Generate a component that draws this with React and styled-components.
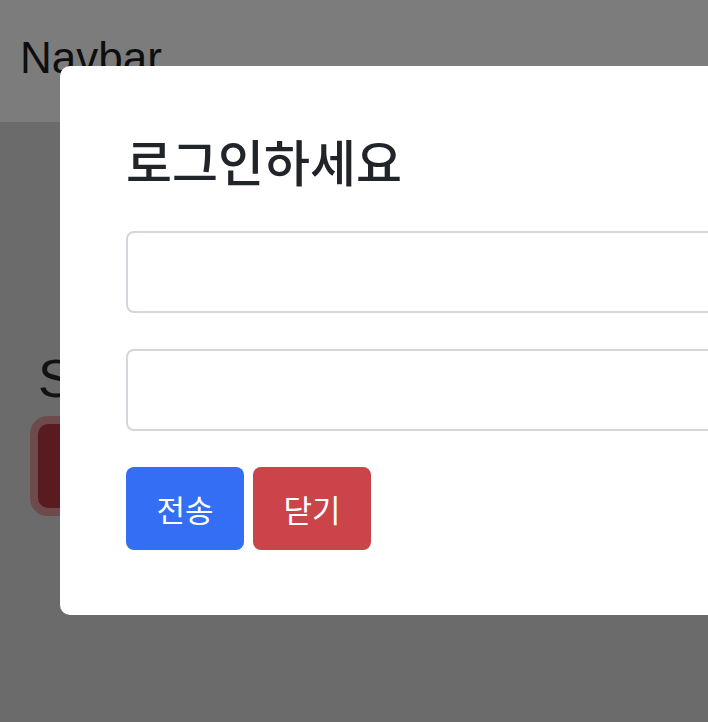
import React from 'react';
import styled, {createGlobalStyle} from 'styled-components';

const GlobalStyle = createGlobalStyle`
    html, body {
        margin: 0;
        padding: 0;
        height: 100%;
        overflow: hidden;
        background-color: #6b6b6b;
        font-family: "Liberation Sans", "Noto Sans CJK KR", sans-serif;
    }
`;

const Page = styled.div`
    position: relative;
    width: 100%;
    height: 722px;
    overflow: hidden;
`;

const Navbar = styled.nav`
    height: 122px;
    background-color: #7c7c7c;
    display: flex;
    align-items: center;
    padding: 0 20px;
    box-sizing: border-box;
`;

const Brand = styled.span`
    font-size: 44px;
    color: #0e0e0e;
    margin-top: -6px;
`;

const Content = styled.main`
    padding: 224px 38px 0;
`;

const Title = styled.h2`
    margin: 0 0 13px;
    font-size: 54px;
    font-weight: 400;
    line-height: 1.2;
    color: #111214;
`;

const DimButton = styled.button`
    width: 160px;
    height: 84px;
    border: none;
    border-radius: 10px;
    background-color: #581c20;
    box-shadow: 0 0 0 8px #6e4a4c;
`;

const Modal = styled.div`
    position: absolute;
    top: 66px;
    left: 60px;
    width: 780px;
    box-sizing: border-box;
    padding: 66px 66px 65px;
    background-color: #fff;
    border-radius: 10px;
`;

const ModalTitle = styled.h1`
    margin: 0 0 43px;
    font-family: "Noto Sans CJK KR", sans-serif;
    font-size: 50px;
    font-weight: 500;
    line-height: 56px;
    color: #212529;
`;

const Field = styled.input`
    display: block;
    width: 100%;
    height: 82px;
    box-sizing: border-box;
    margin: 0 0 36px;
    border: 2px solid #d3d6da;
    border-radius: 8px;
    background: #fff;
    outline: none;
`;

const Actions = styled.div`
    display: flex;
    gap: 9px;
`;

const Button = styled.button`
    width: 118px;
    height: 83px;
    padding: 0;
    border: none;
    border-radius: 8px;
    font-family: "Noto Sans CJK KR", sans-serif;
    font-size: 31px;
    font-weight: 400;
    color: #fff;
    background-color: ${props => props.danger ? '#cb444a' : '#336ef5'};
    cursor: pointer;
`;

function App() {
    return (
        <React.Fragment>
            <GlobalStyle />
            <Page>
                <Navbar>
                    <Brand>Navbar</Brand>
                </Navbar>
                <Content>
                    <Title>Shop</Title>
                    <DimButton />
                </Content>
                <Modal>
                    <ModalTitle>로그인하세요</ModalTitle>
                    <Field type="text" />
                    <Field type="password" />
                    <Actions>
                        <Button>전송</Button>
                        <Button danger>닫기</Button>
                    </Actions>
                </Modal>
            </Page>
        </React.Fragment>
    );
}

export default App;
